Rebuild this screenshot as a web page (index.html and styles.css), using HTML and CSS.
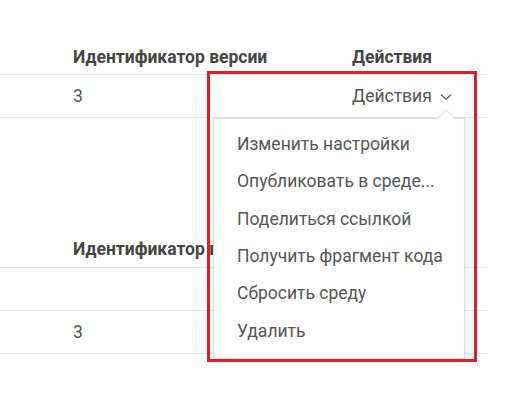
FILE: index.html
```html
<!DOCTYPE html>
<html lang="ru">
<head>
<meta charset="utf-8">
<link rel="stylesheet" href="styles.css">
</head>
<body>
<div class="page">
  <div class="table first">
    <div class="row head">
      <div class="cell"></div>
      <div class="cell">Идентификатор версии</div>
      <div class="cell">Действия</div>
    </div>
    <div class="row">
      <div class="cell"></div>
      <div class="cell">3</div>
      <div class="cell actions">
        <span class="toggle">Действия
          <svg class="chev" width="12" height="8" viewBox="0 0 12 8"><path d="M1 1.5 L6 6.5 L11 1.5" fill="none" stroke="#555" stroke-width="1.2"/></svg>
        </span>
      </div>
    </div>
  </div>

  <div class="table second">
    <div class="row head">
      <div class="cell"></div>
      <div class="cell">Идентификатор версии</div>
      <div class="cell"></div>
    </div>
    <div class="row">
      <div class="cell"></div>
      <div class="cell"></div>
      <div class="cell"></div>
    </div>
    <div class="row">
      <div class="cell"></div>
      <div class="cell">3</div>
      <div class="cell"></div>
    </div>
  </div>

  <div class="menu">
    <span class="caret"></span>
    <div class="item">Изменить настройки</div>
    <div class="item">Опубликовать в среде...</div>
    <div class="item">Поделиться ссылкой</div>
    <div class="item">Получить фрагмент кода</div>
    <div class="item">Сбросить среду</div>
    <div class="item">Удалить</div>
  </div>

  <div class="highlight"></div>
</div>
</body>
</html>
```

FILE: styles.css
```css
html, body {
  margin: 0;
  padding: 0;
  background: #fff;
}
body {
  font-family: Roboto, "Noto Sans", sans-serif;
  color: #555;
  font-size: 17.5px;
}
.page {
  position: relative;
  width: 519px;
  height: 404px;
  overflow: hidden;
}
.table {
  width: 487px;
}
.first {
  padding-top: 35px;
}
.second {
  padding-top: 110px;
}
.row {
  display: grid;
  grid-template-columns: 73px 279px 1fr;
  height: 42px;
  align-items: center;
  border-bottom: 1px solid #e6e6e6;
}
.row.head {
  height: 39px;
  font-weight: 700;
  color: #444;
}
.head .cell {
  padding-top: 4px;
}
.second .head .cell {
  padding-top: 3px;
}
.actions .toggle {
  display: inline-flex;
  align-items: center;
  gap: 8px;
}
.chev {
  margin-top: 2px;
}
.menu {
  position: absolute;
  left: 213px;
  top: 118px;
  width: 252px;
  box-sizing: border-box;
  padding: 7px 0 8px;
  background: #fff;
  border: 1px solid #dcdcdc;
  box-shadow: 0 2px 3px rgba(0,0,0,0.15);
}
.caret {
  position: absolute;
  left: 226px;
  top: -7px;
  width: 12px;
  height: 12px;
  background: #fff;
  border-left: 1px solid #dcdcdc;
  border-top: 1px solid #dcdcdc;
  transform: rotate(45deg);
}
.item {
  height: 37.33px;
  line-height: 37.33px;
  padding-left: 23px;
  white-space: nowrap;
  color: #555;
}
.highlight {
  position: absolute;
  left: 207px;
  top: 71px;
  width: 264px;
  height: 285px;
  border: 3px solid #dc2029;
}
```
